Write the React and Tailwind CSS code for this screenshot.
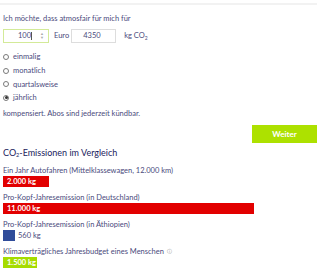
import React, { useState } from 'react';

const options = ["einmalig", "monatlich", "quartalsweise", "jährlich"];

const bars = [
  { label: "Ein Jahr Autofahren (Mittelklassewagen, 12.000 km)", value: "2.000 kg", width: "w-[46px]", color: "bg-[#e20000]", inside: true },
  { label: "Pro-Kopf-Jahresemission (in Deutschland)", value: "11.000 kg", width: "w-[251px]", color: "bg-[#e20000]", inside: true },
  { label: "Pro-Kopf-Jahresemission (in Äthiopien)", value: "560 kg", width: "w-[12px]", color: "bg-[#304c9a]", inside: false },
  { label: "Klimaverträgliches Jahresbudget eines Menschen", value: "1.500 kg", width: "w-[34px]", color: "bg-[#a6dc00]", inside: true, info: true },
];

function App() {
  const [freq, setFreq] = useState("jährlich");

  return (
    <div className="w-[320px] h-[272px] overflow-hidden bg-white font-['Lato','Liberation_Sans',sans-serif] text-[#4a4a7c]">
      <div className="mt-[3px] mr-[3px] h-[2px] bg-[#f2f2f2]" />
      <div className="pl-[3px] pr-[3px]">
        <p className="mt-[9px] text-[7.5px] leading-[10px]">Ich möchte, dass atmosfair für mich für</p>

        {/* --- Betrag --- */}
        <div className="mt-[5px] flex items-center text-[7.5px]">
          <div className="flex h-[14px] w-[46px] items-center border border-[#d3ea98] pl-[14px]">
            <span>100</span>
            <span className="h-[8px] w-px bg-[#555]" />
            <span className="ml-auto mr-[4px] flex flex-col items-center text-[4px] leading-[4px] text-[#aaa]">
              <span>▲</span>
              <span>▼</span>
            </span>
          </div>
          <span className="ml-[5px]">Euro</span>
          <div className="ml-[2px] flex h-[14px] w-[45px] items-center border border-[#dddddd] pl-[11px]">4350</div>
          <span className="ml-[8px]">
            kg CO<sub className="text-[5px]">2</sub>
          </span>
        </div>

        {/* --- Intervall --- */}
        <div className="mt-[7px] flex flex-col text-[7.5px]">
          {options.map((o) => (
            <label key={o} className="flex h-[13.7px] items-center gap-[4px]" onClick={() => setFreq(o)}>
              <span className="flex h-[6px] w-[6px] items-center justify-center rounded-full border border-[#7a7a7a]">
                {freq === o && <span className="h-[3px] w-[3px] rounded-full bg-[#333]" />}
              </span>
              {o}
            </label>
          ))}
        </div>

        <p className="mt-[4px] text-[7.5px] leading-[10px]">kompensiert. Abos sind jederzeit kündbar.</p>
        <div className="mt-[6px] flex justify-end">
          <button className="h-[18px] w-[65px] bg-[#ade100] text-[8px] font-bold text-white">Weiter</button>
        </div>

        {/* --- Vergleich --- */}
        <h2 className="mt-[4px] text-[9px] leading-[12px] text-[#21215c]">
          CO<sub className="text-[5.5px]">2</sub>-Emissionen im Vergleich
        </h2>

        <div className="mt-[7px] flex flex-col gap-[6px]">
          {bars.map((b) => (
            <div key={b.label}>
              <p className="whitespace-nowrap text-[7.5px] leading-[9px]">
                {b.label}
                {b.info && <span className="ml-[3px] align-top text-[5px] text-[#888]">ⓘ</span>}
              </p>
              <div className="mt-[1px] flex h-[11px] items-center">
                <div className={`${b.width} ${b.color} flex h-full items-center pl-[4px]`}>
                  {b.inside && <span className="whitespace-nowrap text-[7.5px] font-bold text-white">{b.value}</span>}
                </div>
                {!b.inside && <span className="ml-[3px] text-[7.5px]">{b.value}</span>}
              </div>
            </div>
          ))}
        </div>
      </div>
    </div>
  );
}

export default App;
